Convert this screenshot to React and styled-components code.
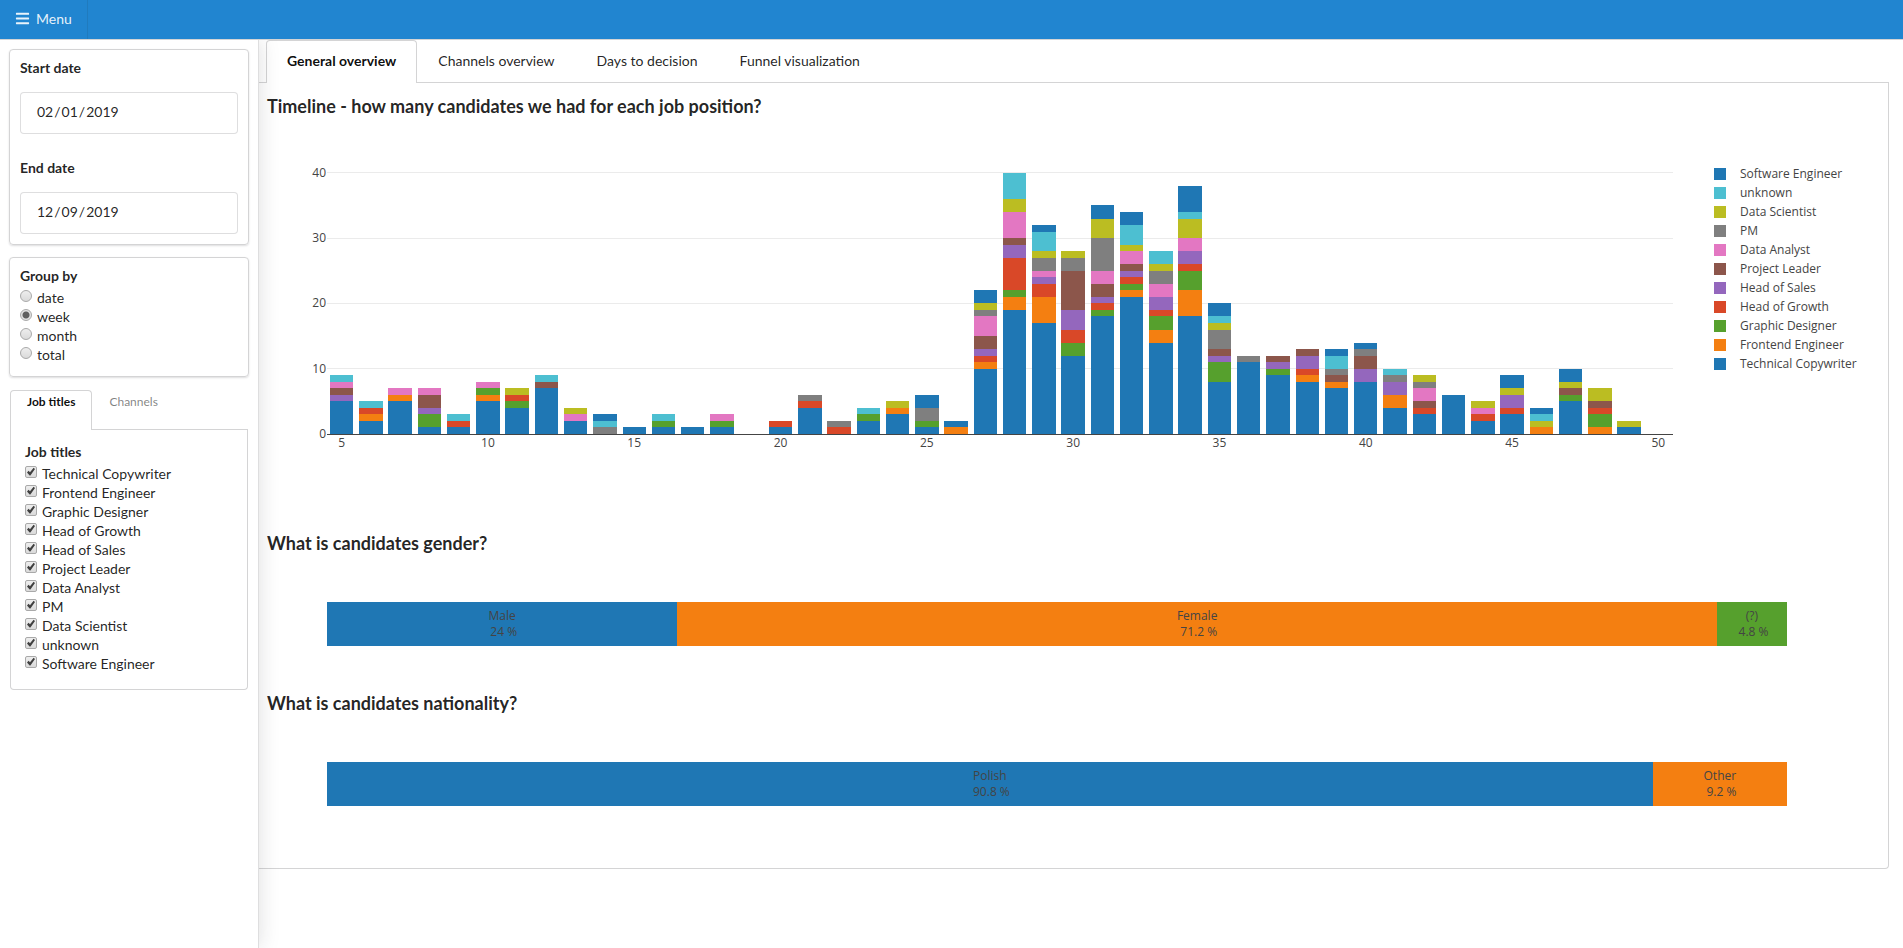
import React, { useState } from 'react';
import styled, { createGlobalStyle, css } from 'styled-components';
import { FaBars } from 'react-icons/fa';

const GlobalStyle = createGlobalStyle`
  *, *::before, *::after {
    box-sizing: border-box;
  }

  body {
    margin: 0;
    background: #FFFFFF;
    color: rgba(0, 0, 0, 0.87);
    font-family: Lato, 'Liberation Sans', sans-serif;
    font-size: 14px;
    line-height: 20px;
  }
`;

/* Series are stacked in this order, from the axis up */
const SERIES = [
  { name: 'Technical Copywriter', color: '#1F77B4' },
  { name: 'Frontend Engineer', color: '#F47F11' },
  { name: 'Graphic Designer', color: '#56A02D' },
  { name: 'Head of Growth', color: '#D94828' },
  { name: 'Head of Sales', color: '#9467BD' },
  { name: 'Project Leader', color: '#8C564B' },
  { name: 'Data Analyst', color: '#E377C2' },
  { name: 'PM', color: '#7F7F7F' },
  { name: 'Data Scientist', color: '#BBBD22' },
  { name: 'unknown', color: '#4DBFD1' },
  { name: 'Software Engineer', color: '#1F77B4' },
];

const TIMELINE = [
  { week: 5, counts: [5, 0, 0, 0, 1, 1, 1, 0, 0, 1, 0] },
  { week: 6, counts: [2, 1, 0, 1, 0, 0, 0, 0, 0, 1, 0] },
  { week: 7, counts: [5, 1, 0, 0, 0, 0, 1, 0, 0, 0, 0] },
  { week: 8, counts: [1, 0, 2, 0, 1, 2, 1, 0, 0, 0, 0] },
  { week: 9, counts: [1, 0, 0, 1, 0, 0, 0, 0, 0, 1, 0] },
  { week: 10, counts: [5, 1, 1, 0, 0, 0, 1, 0, 0, 0, 0] },
  { week: 11, counts: [4, 0, 1, 1, 0, 0, 0, 0, 1, 0, 0] },
  { week: 12, counts: [7, 0, 0, 0, 0, 1, 0, 0, 0, 1, 0] },
  { week: 13, counts: [2, 0, 0, 0, 0, 0, 1, 0, 1, 0, 0] },
  { week: 14, counts: [0, 0, 0, 0, 0, 0, 0, 1, 0, 1, 1] },
  { week: 15, counts: [1, 0, 0, 0, 0, 0, 0, 0, 0, 0, 0] },
  { week: 16, counts: [1, 0, 1, 0, 0, 0, 0, 0, 0, 1, 0] },
  { week: 17, counts: [1, 0, 0, 0, 0, 0, 0, 0, 0, 0, 0] },
  { week: 18, counts: [1, 0, 1, 0, 0, 0, 1, 0, 0, 0, 0] },
  { week: 20, counts: [1, 0, 0, 1, 0, 0, 0, 0, 0, 0, 0] },
  { week: 21, counts: [4, 0, 0, 1, 0, 0, 0, 1, 0, 0, 0] },
  { week: 22, counts: [0, 0, 0, 1, 0, 0, 0, 1, 0, 0, 0] },
  { week: 23, counts: [2, 0, 1, 0, 0, 0, 0, 0, 0, 1, 0] },
  { week: 24, counts: [3, 1, 0, 0, 0, 0, 0, 0, 1, 0, 0] },
  { week: 25, counts: [1, 0, 1, 0, 0, 0, 0, 2, 0, 0, 2] },
  { week: 26, counts: [0, 1, 0, 0, 0, 0, 0, 0, 0, 0, 1] },
  { week: 27, counts: [10, 1, 0, 1, 1, 2, 3, 1, 1, 0, 2] },
  { week: 28, counts: [19, 2, 1, 5, 2, 1, 4, 0, 2, 4, 0] },
  { week: 29, counts: [17, 4, 0, 2, 1, 0, 1, 2, 1, 3, 1] },
  { week: 30, counts: [12, 0, 2, 2, 3, 6, 0, 2, 1, 0, 0] },
  { week: 31, counts: [18, 0, 1, 1, 1, 2, 2, 5, 3, 0, 2] },
  { week: 32, counts: [21, 1, 1, 1, 1, 1, 2, 0, 1, 3, 2] },
  { week: 33, counts: [14, 2, 2, 1, 2, 0, 2, 2, 1, 2, 0] },
  { week: 34, counts: [18, 4, 3, 1, 2, 0, 2, 0, 3, 1, 4] },
  { week: 35, counts: [8, 0, 3, 0, 1, 1, 0, 3, 1, 1, 2] },
  { week: 36, counts: [11, 0, 0, 0, 0, 0, 0, 1, 0, 0, 0] },
  { week: 37, counts: [9, 0, 1, 0, 1, 1, 0, 0, 0, 0, 0] },
  { week: 38, counts: [8, 1, 0, 1, 2, 1, 0, 0, 0, 0, 0] },
  { week: 39, counts: [7, 1, 0, 0, 0, 1, 0, 1, 0, 2, 1] },
  { week: 40, counts: [8, 0, 0, 0, 2, 2, 0, 1, 0, 0, 1] },
  { week: 41, counts: [4, 2, 0, 0, 2, 0, 0, 1, 0, 1, 0] },
  { week: 42, counts: [3, 0, 0, 1, 0, 1, 2, 1, 1, 0, 0] },
  { week: 43, counts: [6, 0, 0, 0, 0, 0, 0, 0, 0, 0, 0] },
  { week: 44, counts: [2, 0, 0, 1, 0, 0, 1, 0, 1, 0, 0] },
  { week: 45, counts: [3, 0, 0, 1, 2, 0, 0, 0, 1, 0, 2] },
  { week: 46, counts: [0, 1, 0, 0, 0, 0, 0, 0, 1, 1, 1] },
  { week: 47, counts: [5, 0, 1, 0, 0, 1, 0, 0, 1, 0, 2] },
  { week: 48, counts: [0, 1, 2, 1, 0, 1, 0, 0, 2, 0, 0] },
  { week: 49, counts: [1, 0, 0, 0, 0, 0, 0, 0, 1, 0, 0] },
];

const GENDER = [
  { label: 'Male', value: 24, color: '#1F77B4' },
  { label: 'Female', value: 71.2, color: '#F47F11' },
  { label: '(?)', value: 4.8, color: '#56A02D' },
];

const NATIONALITY = [
  { label: 'Polish', value: 90.8, color: '#1F77B4' },
  { label: 'Other', value: 9.2, color: '#F47F11' },
];

const GROUPS = ['date', 'week', 'month', 'total'];
const TABS = ['General overview', 'Channels overview', 'Days to decision', 'Funnel visualization'];

// Top bar
const TopBar = styled.header`
  position: relative;
  z-index: 2;
  display: flex;
  height: 40px;
  background: #2185D0;
  border-bottom: 1px solid #D4D4D5;
`;

const MenuButton = styled.button`
  display: flex;
  align-items: center;
  gap: 6px;
  padding: 0 15px 2px;
  border: 0;
  border-right: 1px solid rgba(34, 36, 38, 0.1);
  background: none;
  color: rgba(255, 255, 255, 0.9);
  font: inherit;
  cursor: pointer;
`;

// Sidebar
const Body = styled.div`
  display: flex;
  align-items: stretch;
  min-height: calc(100vh - 40px);
`;

const Sidebar = styled.aside`
  position: relative;
  z-index: 1;
  flex: none;
  display: flex;
  flex-direction: column;
  gap: 12px;
  width: 259px;
  padding: 9px;
  background: #FFFFFF;
  border-right: 1px solid rgba(34, 36, 38, 0.15);
  box-shadow: 0 0 20px rgba(34, 36, 38, 0.15);
`;

const Card = styled.section`
  padding: 8px 10px 10px;
  border: 1px solid #D4D4D5;
  border-radius: 4px;
  box-shadow: 0 1px 2px rgba(34, 36, 38, 0.15);
`;

const DateField = styled.div`
  & + & {
    margin-top: 24px;
  }
`;

const FieldLabel = styled.label`
  display: block;
  margin-bottom: 14px;
  font-weight: 700;
`;

const DateInput = styled.input`
  display: block;
  width: 100%;
  height: 42px;
  padding: 0 15px 2px;
  border: 1px solid rgba(34, 36, 38, 0.15);
  border-radius: 4px;
  background: #FFFFFF;
  color: rgba(0, 0, 0, 0.87);
  font: inherit;
  outline: none;

  &::-webkit-calendar-picker-indicator {
    display: none;
  }
`;

const Fieldset = styled.fieldset`
  margin: 0;
  padding: 0 0 2px;
  border: 0;
`;

const Legend = styled.legend`
  padding: 0 0 2px;
  font-weight: 700;
`;

const OptionLabel = styled.label`
  position: relative;
  display: flex;
  align-items: flex-start;
  gap: 5px;
  line-height: 19px;
`;

const optionBox = css`
  appearance: none;
  flex: none;
  width: 12px;
  height: 12px;
  margin: 2px 0 0;
  border: 1px solid #A9A9A9;
  background: linear-gradient(#EEEEEE, #DADADA);
`;

const Radio = styled.input`
  ${optionBox}
  border-radius: 50%;

  &:checked {
    background: radial-gradient(circle, #606060 0 2px, #606060 3px, #E3E3E3 4px);
  }
`;

const Checkbox = styled.input`
  ${optionBox}
  border-radius: 2px;

  &:checked + svg {
    visibility: visible;
  }
`;

const CheckMark = styled.svg`
  position: absolute;
  top: 2px;
  left: 0;
  visibility: hidden;
  pointer-events: none;
`;

const FilterTabs = styled.div`
  padding: 1px;
`;

const SmallTabList = styled.div`
  display: flex;
  height: 40px;
  border-bottom: 1px solid #D4D4D5;
`;

const SmallTab = styled.button`
  display: flex;
  align-items: flex-start;
  height: 40px;
  padding: 1px 16px;
  border: 1px solid transparent;
  border-bottom: 0;
  border-radius: 4px 4px 0 0;
  background: none;
  color: rgba(0, 0, 0, 0.5);
  font: inherit;
  font-size: 12px;
  cursor: pointer;
  ${props => props.$active && css`
    border-color: #D4D4D5;
    background: #FFFFFF;
    color: rgba(0, 0, 0, 0.95);
    font-weight: 700;
  `}
`;

const FilterPanel = styled.div`
  padding: 12px 14px 14px;
  border: 1px solid #D4D4D5;
  border-top: 0;
  border-radius: 0 0 4px 4px;
`;

// Main area
const Main = styled.main`
  flex: 1;
  min-width: 0;
  padding-right: 14px;
`;

const TabList = styled.nav`
  display: flex;
  height: 43px;
  padding-left: 7px;
  border-bottom: 1px solid #D4D4D5;
`;

const Tab = styled.button`
  height: 43px;
  padding: 10px 20px 12px;
  border: 1px solid transparent;
  border-bottom: 0;
  border-radius: 4px 4px 0 0;
  background: none;
  color: rgba(0, 0, 0, 0.87);
  font: inherit;
  white-space: nowrap;
  cursor: pointer;
  ${props => props.$active && css`
    border-color: #D4D4D5;
    background: #FFFFFF;
    color: rgba(0, 0, 0, 0.95);
    font-weight: 700;
  `}
`;

const Panel = styled.div`
  padding: 12px 21px 16px 8px;
  border: 1px solid #D4D4D5;
  border-top: 0;
  border-left: 0;
  border-radius: 0 0 4px 0;
`;

const Title = styled.h3`
  margin: 0;
  font-size: 18px;
  line-height: 23px;
`;

const ChartRow = styled.div`
  display: flex;
  align-items: flex-start;
  gap: 41px;
  padding: 46px 0 78px 60px;
`;

const Plot = styled.svg`
  flex: 1;
  min-width: 0;
  height: 290px;
  overflow: visible;

  text {
    fill: #444444;
    font-family: 'Open Sans', sans-serif;
    font-size: 12px;
  }
`;

const ChartLegend = styled.ul`
  flex: none;
  width: 153px;
  margin: 0;
  padding: 0;
  list-style: none;
  color: #444444;
  font-family: 'Open Sans', sans-serif;
  font-size: 12px;
  line-height: 19px;
`;

const LegendItem = styled.li`
  display: flex;
  align-items: center;
  gap: 14px;
  white-space: nowrap;

  &::before {
    content: '';
    width: 12px;
    height: 12px;
    background: ${props => props.$color};
  }
`;

const ShareRow = styled.div`
  display: flex;
  height: 44px;
  margin: 47px 80px 46px 60px;
`;

const Share = styled.div`
  display: flex;
  flex-direction: column;
  justify-content: center;
  min-width: 0;
  background: ${props => props.$color};
  color: #444444;
  font-family: 'Open Sans', sans-serif;
  font-size: 12px;
  line-height: 16px;
  text-align: center;
  white-space: pre;
`;

// Plot geometry: weeks 4.5 to 50.5 across, one candidate is UNIT px high
const FIRST = 4.5;
const SPAN = 46;
const UNIT = 6.53;
const BASE = 270;
const xPos = week => `${((week - FIRST) / SPAN) * 100}%`;
const yPos = count => Math.round(BASE - count * UNIT);

const TimelineChart = ({ visible }) => (
  <Plot role="img" aria-label="Candidates per week, by job position">
    {[10, 20, 30, 40].map(tick => (
      <rect key={tick} x="0" y={Math.floor(BASE - tick * UNIT)} width="100%" height="1" fill="#EBEBEB" />
    ))}
    {TIMELINE.map(({ week, counts }) => {
      let total = 0;
      return counts.map((count, i) => {
        if (!count || !visible.includes(SERIES[i].name)) return null;
        const bottom = yPos(total);
        total += count;
        return (
          <rect
            key={`${week}-${SERIES[i].name}`}
            x={xPos(week - 0.4)}
            y={yPos(total)}
            width={`${(0.8 / SPAN) * 100}%`}
            height={bottom - yPos(total)}
            fill={SERIES[i].color}
            shapeRendering="crispEdges"
          />
        );
      });
    })}
    <rect x="0" y={BASE} width="100%" height="1" fill="#444444" />
    {[0, 10, 20, 30, 40].map(tick => (
      <text key={tick} x="-1" y={yPos(tick) + 4} textAnchor="end">{tick}</text>
    ))}
    {[5, 10, 15, 20, 25, 30, 35, 40, 45, 50].map(tick => (
      <text key={tick} x={xPos(tick)} y={BASE + 13} textAnchor="middle">{tick}</text>
    ))}
  </Plot>
);

const ShareChart = ({ data }) => (
  <ShareRow>
    {data.map(({ label, value, color }) => (
      <Share key={label} $color={color} style={{ width: `${value}%` }}>
        <span>{label}</span>
        <span>{` ${value} %`}</span>
      </Share>
    ))}
  </ShareRow>
);

const App = () => {
  const [tab, setTab] = useState(TABS[0]);
  const [filter, setFilter] = useState('Job titles');
  const [group, setGroup] = useState('week');
  const [titles, setTitles] = useState(SERIES.map(s => s.name));

  const toggleTitle = name => {
    setTitles(titles.includes(name) ? titles.filter(t => t !== name) : [...titles, name]);
  };

  return (
    <>
      <GlobalStyle />
      <TopBar>
        <MenuButton type="button">
          <FaBars size={15} />
          Menu
        </MenuButton>
      </TopBar>
      <Body>
        <Sidebar>
          <Card>
            <DateField>
              <FieldLabel htmlFor="start">Start date</FieldLabel>
              <DateInput id="start" type="date" defaultValue="2019-02-01" />
            </DateField>
            <DateField>
              <FieldLabel htmlFor="end">End date</FieldLabel>
              <DateInput id="end" type="date" defaultValue="2019-12-09" />
            </DateField>
          </Card>
          <Card>
            <Fieldset>
              <Legend>Group by</Legend>
              {GROUPS.map(name => (
                <OptionLabel key={name}>
                  <Radio type="radio" name="group" checked={group === name} onChange={() => setGroup(name)} />
                  {name}
                </OptionLabel>
              ))}
            </Fieldset>
          </Card>
          <FilterTabs>
            <SmallTabList>
              {['Job titles', 'Channels'].map(name => (
                <SmallTab key={name} type="button" $active={filter === name} onClick={() => setFilter(name)}>
                  {name}
                </SmallTab>
              ))}
            </SmallTabList>
            <FilterPanel>
              <Fieldset>
                <Legend>Job titles</Legend>
                {SERIES.map(({ name }) => (
                  <OptionLabel key={name}>
                    <Checkbox type="checkbox" checked={titles.includes(name)} onChange={() => toggleTitle(name)} />
                    <CheckMark width="12" height="12" viewBox="0 0 12 12">
                      <path d="M2 6.4 L3.6 4.8 L5 6.2 L8.6 1.8 L10 3 L5.4 9.6 L4.6 9.6 Z" fill="#404040" />
                    </CheckMark>
                    {name}
                  </OptionLabel>
                ))}
              </Fieldset>
            </FilterPanel>
          </FilterTabs>
        </Sidebar>
        <Main>
          <TabList>
            {TABS.map(name => (
              <Tab key={name} type="button" $active={tab === name} onClick={() => setTab(name)}>
                {name}
              </Tab>
            ))}
          </TabList>
          <Panel>
            <Title>Timeline - how many candidates we had for each job position?</Title>
            <ChartRow>
              <TimelineChart visible={titles} />
              <ChartLegend>
                {[...SERIES].reverse().map(({ name, color }) => (
                  <LegendItem key={name} $color={color}>{name}</LegendItem>
                ))}
              </ChartLegend>
            </ChartRow>
            <Title>What is candidates gender?</Title>
            <ShareChart data={GENDER} />
            <Title>What is candidates nationality?</Title>
            <ShareChart data={NATIONALITY} />
          </Panel>
        </Main>
      </Body>
    </>
  );
};

export default App;
